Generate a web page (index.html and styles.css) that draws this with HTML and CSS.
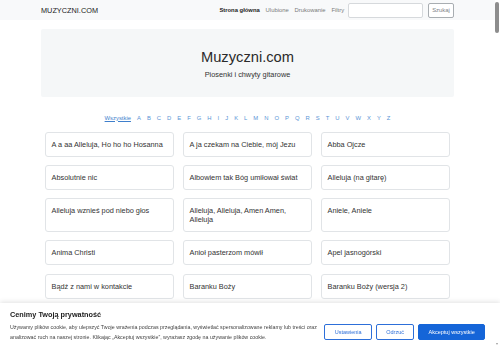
FILE: index.html
```html
<!DOCTYPE html>
<html lang="pl">
<head>
<meta charset="utf-8">
<title>Muzyczni.com</title>
<link rel="stylesheet" href="styles.css">
</head>
<body>
<div class="page">
  <nav class="navbar">
    <div class="container nav-inner">
      <a class="brand" href="#">MUZYCZNI.COM</a>
      <ul class="nav-links">
        <li><a class="nav-link active" href="#">Strona główna</a></li>
        <li><a class="nav-link" href="#">Ulubione</a></li>
        <li><a class="nav-link" href="#">Drukowanie</a></li>
        <li><a class="nav-link" href="#">Filtry</a></li>
      </ul>
      <form class="search">
        <input class="search-input" type="text">
        <button class="search-btn" type="button">Szukaj</button>
      </form>
    </div>
  </nav>

  <main class="container">
    <header class="jumbotron">
      <h1 class="title">Muzyczni.com</h1>
      <p class="subtitle">Piosenki i chwyty gitarowe</p>
    </header>

    <div class="alphabet">
      <a class="letter all" href="#">Wszystkie</a>
      <a class="letter" href="#">A</a><a class="letter" href="#">B</a><a class="letter" href="#">C</a><a class="letter" href="#">D</a><a class="letter" href="#">E</a><a class="letter" href="#">F</a><a class="letter" href="#">G</a><a class="letter" href="#">H</a><a class="letter" href="#">I</a><a class="letter" href="#">J</a><a class="letter" href="#">K</a><a class="letter" href="#">L</a><a class="letter" href="#">M</a><a class="letter" href="#">N</a><a class="letter" href="#">O</a><a class="letter" href="#">P</a><a class="letter" href="#">Q</a><a class="letter" href="#">R</a><a class="letter" href="#">S</a><a class="letter" href="#">T</a><a class="letter" href="#">U</a><a class="letter" href="#">V</a><a class="letter" href="#">W</a><a class="letter" href="#">X</a><a class="letter" href="#">Y</a><a class="letter" href="#">Z</a>
    </div>

    <div class="songs">
      <a class="song" href="#">A a aa Alleluja, Ho ho ho Hosanna</a>
      <a class="song" href="#">A ja czekam na Ciebie, mój Jezu</a>
      <a class="song" href="#">Abba Ojcze</a>
      <a class="song" href="#">Absolutnie nic</a>
      <a class="song" href="#">Albowiem tak Bóg umiłował świat</a>
      <a class="song" href="#">Alleluja (na gitarę)</a>
      <a class="song" href="#">Alleluja wznieś pod niebo głos</a>
      <a class="song" href="#">Alleluja, Alleluja, Amen Amen, Alleluja</a>
      <a class="song" href="#">Aniele, Aniele</a>
      <a class="song" href="#">Anima Christi</a>
      <a class="song" href="#">Anioł pasterzom mówił</a>
      <a class="song" href="#">Apel jasnogórski</a>
      <a class="song" href="#">Bądź z nami w kontakcie</a>
      <a class="song" href="#">Baranku Boży</a>
      <a class="song" href="#">Baranku Boży (wersja 2)</a>
      <a class="song" href="#">Barka</a>
      <a class="song" href="#">Bądź pozdrowiona</a>
      <a class="song" href="#">Bądź uwielbiony</a>
    </div>
  </main>

  <div class="cookie">
    <div class="cookie-title">Cenimy Twoją prywatność</div>
    <div class="cookie-row">
      <p class="cookie-text">Używamy plików cookie, aby ulepszyć Twoje wrażenia podczas przeglądania, wyświetlać spersonalizowane reklamy lub treści oraz analizować ruch na naszej stronie. Klikając „Akceptuj wszystkie”, wyrażasz zgodę na używanie plików cookie.</p>
      <div class="cookie-actions">
        <button class="cbtn outline" type="button">Ustawienia</button>
        <button class="cbtn outline" type="button">Odrzuć</button>
        <button class="cbtn primary" type="button">Akceptuj wszystkie</button>
      </div>
    </div>
  </div>

  <div class="scrollbar" aria-hidden="true">
    <div class="scroll-thumb"></div>
    <div class="scroll-arrow"></div>
  </div>
</div>
</body>
</html>
```

FILE: styles.css
```css
html, body {
  margin: 0;
  padding: 0;
  background: #fff;
}
::-webkit-scrollbar {
  width: 0;
}
body {
  font-family: "Liberation Sans", Arial, sans-serif;
  color: #212529;
  padding-right: 5px;
}
.page {
  min-height: 3900px;
}
a {
  text-decoration: none;
  color: inherit;
}
.container {
  width: 413px;
  margin: 0 auto;
}

/* navbar */
.navbar {
  background: #f8f9fa;
  height: 20px;
}
.nav-inner {
  display: flex;
  align-items: center;
  height: 20px;
}
.brand {
  font-size: 7.33px;
  color: #222;
  line-height: 9px;
}
.nav-links {
  list-style: none;
  margin: 0 0 0 auto;
  padding: 0;
  display: flex;
}
.nav-link {
  display: block;
  padding: 0 2.93px;
  font-size: 5.86px;
  line-height: 8px;
  color: #7a7a7a;
}
.nav-link.active {
  color: #222;
  font-weight: bold;
}
.search {
  display: flex;
  align-items: center;
  margin: 0 0 0 1px;
}
.search-input {
  box-sizing: border-box;
  width: 75px;
  height: 15px;
  border: 1px solid #d6d9dc;
  border-radius: 2px;
  background: #fff;
  padding: 0;
  margin: 0 5px 0 0;
}
.search-btn {
  box-sizing: border-box;
  width: 26px;
  height: 15px;
  border: 1px solid #a8adb1;
  border-radius: 2px;
  background: #fff;
  color: #7d8288;
  font-family: inherit;
  font-size: 5.86px;
  padding: 0;
}

/* jumbotron */
.jumbotron {
  margin-top: 9px;
  background: #f5f7f8;
  border-radius: 2px;
  padding: 19px 0 18px;
  text-align: center;
}
.title {
  margin: 0;
  font-weight: normal;
  font-size: 14.7px;
  line-height: 18px;
  color: #2b2b2b;
}
.subtitle {
  margin: 3.5px 0 0;
  font-size: 7.33px;
  line-height: 9px;
  color: #333;
}

/* alphabet */
.alphabet {
  display: flex;
  justify-content: center;
  margin-top: 17px;
  height: 8px;
  align-items: center;
}
.letter {
  padding: 0 3px;
  font-size: 5.86px;
  line-height: 8px;
  color: #5b95d6;
}
.letter.all {
  text-decoration: underline;
  color: #3f7fcc;
}

/* songs */
.songs {
  display: grid;
  grid-template-columns: repeat(3, 1fr);
  column-gap: 9px;
  row-gap: 8.3px;
  margin: 10px 4px 0;
  align-items: stretch;
}
.song {
  display: block;
  border: 1px solid #e1e4e7;
  border-radius: 3px;
  padding: 7px 5.5px;
  font-size: 7.33px;
  line-height: 9px;
  color: #333;
  background: #fff;
}

/* cookie banner */
.cookie {
  position: fixed;
  left: 0;
  right: 0;
  bottom: 0;
  height: 45px;
  box-sizing: border-box;
  background: #fff;
  box-shadow: 0 -1px 5px rgba(0, 0, 0, 0.12);
  padding: 8px 15px 0 10px;
}
.cookie-title {
  font-weight: bold;
  font-size: 7.3px;
  line-height: 8px;
  color: #222;
}
.cookie-row {
  display: flex;
  align-items: center;
  margin-top: 3px;
}
.cookie-text {
  flex: 1;
  margin: 0 5px 0 0;
  font-size: 5.3px;
  line-height: 10px;
  color: #444;
}
.cookie-actions {
  display: flex;
  gap: 4px;
}
.cbtn {
  box-sizing: border-box;
  height: 16px;
  padding: 0 9.3px;
  border: 1px solid #2d6fd9;
  border-radius: 2px;
  font-family: inherit;
  font-size: 5.5px;
  white-space: nowrap;
}
.cbtn.outline {
  background: #fff;
  color: #2d6fd9;
}
.cbtn.primary {
  background: #1565d8;
  border-color: #1565d8;
  color: #fff;
}

/* drawn scrollbar */
.scrollbar {
  position: fixed;
  top: 0;
  right: 0;
  width: 5px;
  height: 100%;
}
.scroll-thumb {
  margin: 2px 0 0 0;
  width: 4px;
  height: 31px;
  background: #8d8d8d;
  border-radius: 2px;
}
.scroll-arrow {
  position: absolute;
  bottom: 3px;
  left: 1px;
  width: 0;
  height: 0;
  border-left: 1.5px solid transparent;
  border-right: 1.5px solid transparent;
  border-top: 2px solid #9a9a9a;
}
```
